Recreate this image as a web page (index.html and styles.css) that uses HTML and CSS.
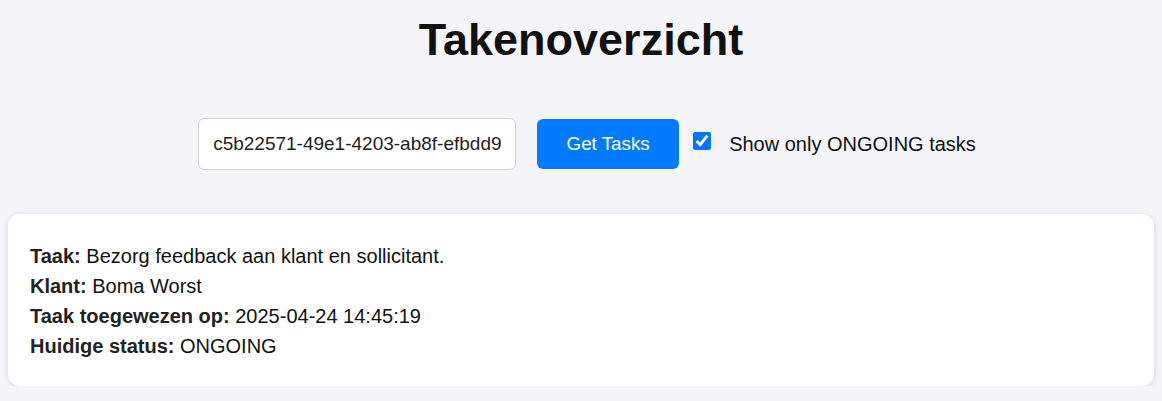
FILE: index.html
```html
<!DOCTYPE html>
<html lang="nl">
<head>
<meta charset="utf-8">
<title>Takenoverzicht</title>
<link rel="stylesheet" href="styles.css">
</head>
<body>
<div class="page">
  <h1 class="title">Takenoverzicht</h1>
  <div class="controls">
    <input class="task-input" type="text" value="c5b22571-49e1-4203-ab8f-efbdd9c3a1f2">
    <button class="btn-primary" type="button">Get Tasks</button>
    <label class="filter">
      <input class="filter-check" type="checkbox" checked>
      <span class="filter-text">Show only ONGOING tasks</span>
    </label>
  </div>
  <div class="task-card">
    <div class="task-line"><strong>Taak:</strong> Bezorg feedback aan klant en sollicitant.</div>
    <div class="task-line"><strong>Klant:</strong> Boma Worst</div>
    <div class="task-line"><strong>Taak toegewezen op:</strong> 2025-04-24 14:45:19</div>
    <div class="task-line"><strong>Huidige status:</strong> ONGOING</div>
  </div>
</div>
</body>
</html>
```

FILE: styles.css
```css
* { box-sizing: border-box; }

html, body {
  margin: 0;
  padding: 0;
  background: #f4f4f9;
  font-family: "Liberation Sans", Arial, sans-serif;
  color: #222;
}

.page {
  padding: 0 8px;
}

.title {
  margin: 14px 0 0;
  text-align: center;
  font-size: 45px;
  line-height: 52px;
  font-weight: 700;
  color: #111;
}

.controls {
  margin-top: 52px;
  display: flex;
  justify-content: center;
  align-items: center;
  padding-left: 12px;
}

.task-input {
  width: 318px;
  height: 52px;
  padding: 0 14px;
  border: 1px solid #cfcfd4;
  border-radius: 6px;
  background: #fff;
  font-family: "Liberation Sans", Arial, sans-serif;
  font-size: 19px;
  color: #222;
  outline: none;
}

.btn-primary {
  margin-left: 21px;
  width: 142px;
  height: 50px;
  border: none;
  border-radius: 6px;
  background: #007bff;
  color: #fff;
  font-family: "Liberation Sans", Arial, sans-serif;
  font-size: 18.75px;
  cursor: pointer;
}

.filter {
  display: flex;
  align-items: center;
  margin-left: 14px;
  font-size: 20px;
  color: #111;
}

.filter-check {
  width: 18px;
  height: 18px;
  margin: -6px 0 0 0;
  accent-color: #0075ff;
}

.filter-text {
  margin-left: 18px;
}

.task-card {
  margin-top: 44px;
  background: #fff;
  border-radius: 12px;
  box-shadow: 0 1px 6px rgba(0, 0, 0, 0.13);
  padding: 27px 22px 25px;
  font-size: 20px;
  line-height: 30px;
  color: #111;
}

.task-line strong {
  font-weight: 700;
  color: #222;
}
```
